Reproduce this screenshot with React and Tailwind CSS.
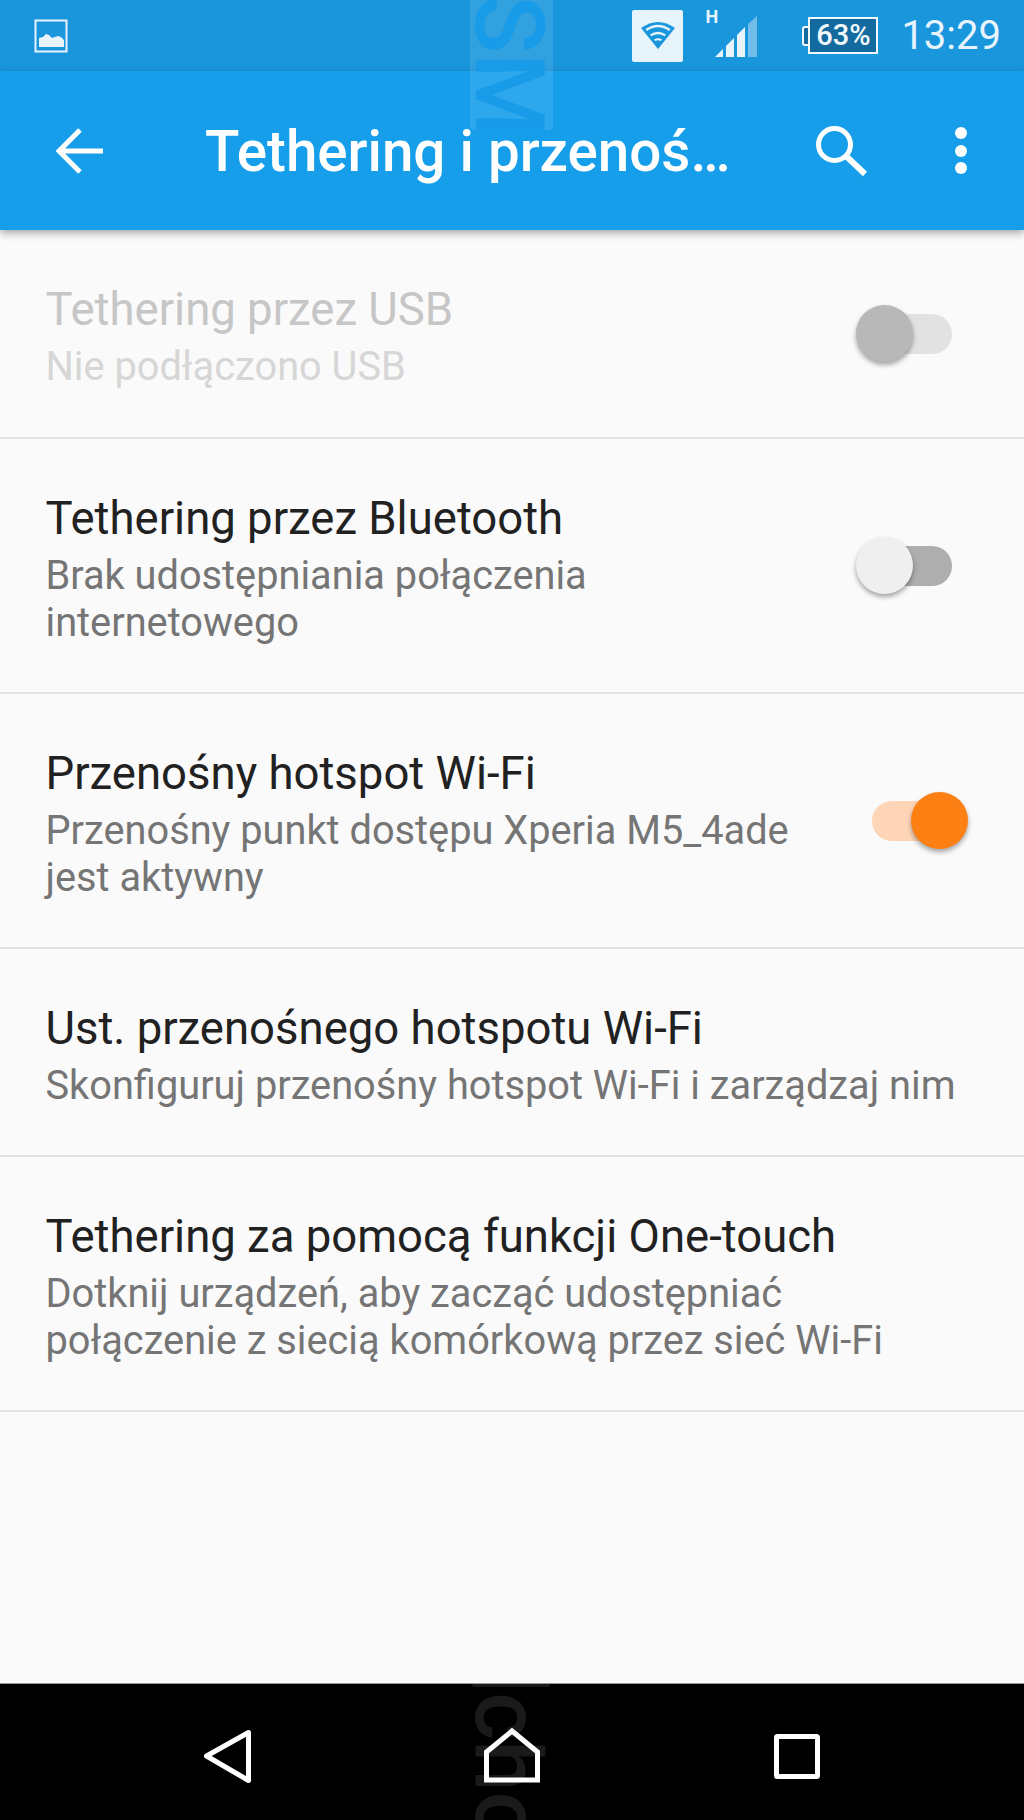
import React from "react";

const rows = [
  { title: "Tethering przez USB", sub: ["Nie podłączono USB"], toggle: "disabled", h: "h-[209px]" },
  { title: "Tethering przez Bluetooth", sub: ["Brak udostępniania połączenia", "internetowego"], toggle: "off", h: "h-[255px]" },
  { title: "Przenośny hotspot Wi-Fi", sub: ["Przenośny punkt dostępu Xperia M5_4ade", "jest aktywny"], toggle: "on", h: "h-[255px]" },
  { title: "Ust. przenośnego hotspotu Wi-Fi", sub: ["Skonfiguruj przenośny hotspot Wi-Fi i zarządzaj nim"], h: "h-[208px]" },
  { title: "Tethering za pomocą funkcji One-touch", sub: ["Dotknij urządzeń, aby zacząć udostępniać", "połączenie z siecią komórkową przez sieć Wi-Fi"], h: "h-[255px]" },
];

function Toggle({ state }) {
  const track = { disabled: "bg-[#e2e2e2]", off: "bg-[#aeaeae]", on: "bg-[#fed6b7]" }[state];
  const thumb = {
    disabled: "left-0 bg-[#b8b8b8]",
    off: "left-0 bg-[#efefef]",
    on: "right-0 bg-[#fd8014]",
  }[state];
  return (
    <div className="relative w-[112px] h-[57px] mr-[56px] flex items-center">
      <div className={"ml-[16px] w-[80px] h-[40px] rounded-full " + track} />
      <div className={"absolute top-0 w-[57px] h-[57px] rounded-full shadow-[0_3px_5px_rgba(0,0,0,0.35)] " + thumb} />
    </div>
  );
}

function Row({ row }) {
  const dim = row.toggle === "disabled";
  return (
    <div className={"flex items-center justify-between border-b-2 border-[#e2e2e2] pl-[45.5px] " + row.h}>
      <div>
        <div className={"text-[45.5px] leading-[66px] whitespace-nowrap " + (dim ? "text-[#c6c6c6]" : "text-[#212121]")}>{row.title}</div>
        {row.sub.map((s) => (
          <div key={s} className={"text-[39.75px] leading-[47px] whitespace-nowrap " + (dim ? "text-[#d6d6d6]" : "text-[#757575]")}>{s}</div>
        ))}
      </div>
      {row.toggle && <Toggle state={row.toggle} />}
    </div>
  );
}

export default function App() {
  return (
    <div className="relative w-[1024px] h-[1820px] overflow-hidden flex flex-col bg-[#fafafa] font-['Roboto',sans-serif]">
      {/* status bar */}
      <div className="h-[71px] shrink-0 bg-[#1a96dd] flex items-center pl-[34px] pr-[23px]">
        <svg width="34" height="34" viewBox="0 0 34 34">
          <rect x="1.5" y="1.5" width="31" height="31" fill="none" stroke="#e8f4fc" strokeWidth="2" />
          <path d="M5 28V19l4-1 3-3 3 1 3 3 3-1 3-1 3 1 3 3v7z" fill="#e8f4fc" />
        </svg>
        <div className="ml-auto w-[51px] h-[52px] rounded-[2px] bg-[#e8f4fc] flex items-center justify-center">
          <svg width="36" height="32" viewBox="0 0 36 32">
            <path d="M18 29 L1 8 Q18 -4 35 8 Z" fill="#1a96dd" />
            <path d="M5.5 9 Q18 0.5 30.5 9 L29 11 Q18 3.5 7 11 Z" fill="#e8f4fc" />
            <path d="M10 14.5 Q18 9 26 14.5 L24.6 16.3 Q18 12 11.4 16.3 Z" fill="#e8f4fc" />
            <path d="M14 19.5 Q18 17 22 19.5 L20.8 21 Q18 19.5 15.2 21 Z" fill="#e8f4fc" />
          </svg>
        </div>
        <div className="relative ml-[32px] w-[42px] h-[41px] mt-[2px]">
          <div className="absolute left-[-10px] top-[-8px] text-[18px] leading-[18px] font-bold text-[#e8f4fc]">H</div>
          <svg width="42" height="41" viewBox="0 0 42 41">
            <path d="M0 41 L8 33 V41 Z" fill="#e8f4fc" />
            <path d="M11 30 L19 22 V41 H11 Z" fill="#e8f4fc" />
            <path d="M22 19 L30 11 V41 H22 Z" fill="#e8f4fc" />
            <path d="M33 8 L42 0 V41 H33 Z" fill="#70bdea" />
          </svg>
        </div>
        <div className="ml-[45px] flex items-center">
          <div className="w-[8px] h-[20px] -mr-[2px] border-2 border-r-0 border-[#f2f9fd] bg-[#126a9e] rounded-l-[3px]" />
          <div className="w-[70px] h-[37px] border-2 border-[#f2f9fd] bg-[#126a9e] flex items-center justify-center text-[29px] font-medium leading-none text-[#f2f9fd]">63%</div>
        </div>
        <div className="ml-[23px] text-[40px] leading-[44px] text-[#e8f4fc]">13:29</div>
      </div>

      {/* toolbar */}
      <div className="h-[159px] shrink-0 bg-[#169eeb] shadow-[0_3px_8px_rgba(0,0,0,0.35)] z-10 flex items-center pl-[56px] pr-[57px] text-white">
        <svg width="48" height="48" viewBox="0 0 48 48">
          <path d="M47 24 H5 M24 3 L3 24 L24 45" fill="none" stroke="white" strokeWidth="5" />
        </svg>
        <div className="flex-1 ml-[101px] text-[56.5px] leading-[64px] mt-[3px] font-medium whitespace-nowrap">Tethering i przenoś…</div>
        <svg width="54" height="54" viewBox="0 0 54 54">
          <circle cx="20.5" cy="20.5" r="16" fill="none" stroke="white" strokeWidth="5" />
          <path d="M32 32 L51 50" fill="none" stroke="white" strokeWidth="6" />
        </svg>
        <div className="ml-[87px] flex flex-col gap-[5.5px]">
          <div className="w-[12px] h-[12px] rounded-full bg-white" />
          <div className="w-[12px] h-[12px] rounded-full bg-white" />
          <div className="w-[12px] h-[12px] rounded-full bg-white" />
        </div>
      </div>

      {/* settings list */}
      <div className="flex-1">
        {rows.map((r) => (
          <Row key={r.title} row={r} />
        ))}
      </div>

      {/* nav bar */}
      <div className="relative h-[137px] shrink-0 bg-black border-t border-[#999] flex items-center justify-center gap-[225px] pt-[8px] overflow-hidden">
        {/* watermark behind the nav icons */}
        <div className="absolute left-[472px] top-0 w-[78px] h-[3px] rounded-b-[3px] bg-[#1a1a1a]" />
        <div className="absolute left-[457px] top-[-16px] w-[100px] h-[200px] flex items-center justify-center">
          <span className="rotate-90 text-[92px] leading-none font-medium text-[#1a1a1a] whitespace-nowrap">cho</span>
        </div>
        <svg className="relative" width="60" height="60" viewBox="0 0 60 60">
          <path d="M51.5 6.5 V54.5 L9.5 30 Z" fill="none" stroke="white" strokeWidth="5" strokeLinejoin="round" />
        </svg>
        <svg className="relative" width="60" height="60" viewBox="0 0 60 60">
          <path d="M30 5 L55.5 26 V54 H4.5 V26 Z" fill="none" stroke="white" strokeWidth="5" />
        </svg>
        <svg className="relative" width="60" height="60" viewBox="0 0 60 60">
          <rect x="9.5" y="10.5" width="41" height="40" rx="1" fill="none" stroke="white" strokeWidth="5" />
        </svg>
      </div>

      {/* vertical watermark over the bars */}
      <div className="absolute left-[470px] top-0 w-[83px] h-[130px] bg-white/10 rounded-b-[4px] z-20 overflow-hidden">
        <div className="absolute left-[-11px] top-[16px] w-[100px] h-[100px] flex items-center justify-center">
          <span className="rotate-90 text-[96px] leading-none font-medium text-[#189be8] whitespace-nowrap">SM</span>
        </div>
      </div>
    </div>
  );
}
